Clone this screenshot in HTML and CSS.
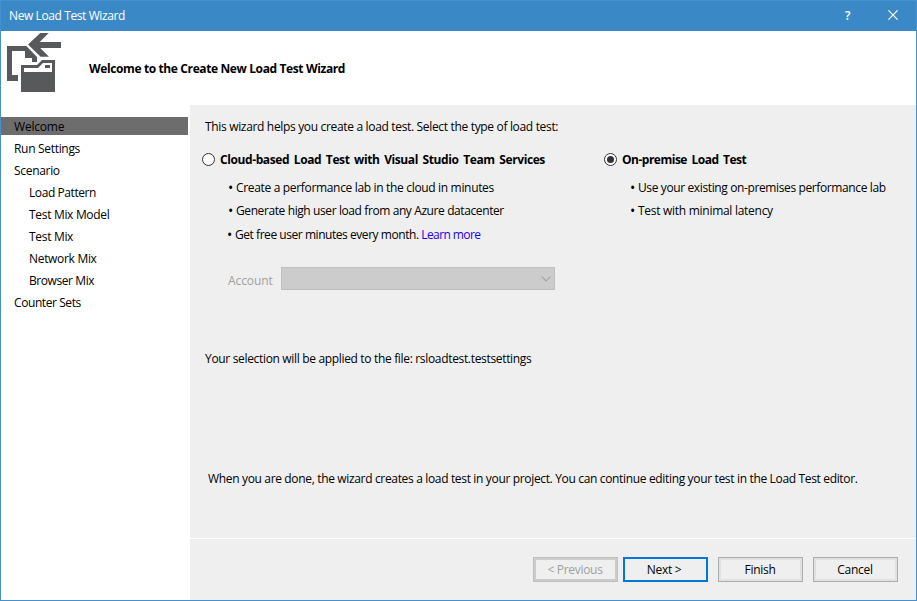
FILE: index.html
```html
<!DOCTYPE html>
<html lang="en">
<head>
<meta charset="utf-8">
<title>New Load Test Wizard</title>
<link rel="stylesheet" href="styles.css">
</head>
<body>
<div class="window">
  <header class="titlebar">
    <span class="title">New Load Test Wizard</span>
    <span class="help">?</span>
    <svg class="close" width="10" height="10" viewBox="0 0 10 10"><path d="M.4.4 9.6 9.6M9.6.4.4 9.6" stroke="#fff" stroke-width="1.2"/></svg>
  </header>
  <div class="banner">
    <svg class="logo" width="54" height="60" viewBox="7 33 54 60">
      <g fill="#58595b">
        <path d="M28 44.5 40.3 33H48.7L39.7 42H61V48H40.2L49 56.8H40.7Z"/>
        <path d="M7 46H26.3L37 57V62H32V58H25V51H12V75H18V81H7Z"/>
        <path fill-rule="evenodd" d="M21 65H37L42 60H55V92H21ZM24 68V72H52V63H43L38 68ZM45 65H50V68H45Z"/>
      </g>
    </svg>
    <h1 class="heading">Welcome to the Create New Load Test Wizard</h1>
  </div>
  <div class="body">
    <nav class="steps">
      <div class="step active">Welcome</div>
      <div class="step">Run Settings</div>
      <div class="step">Scenario</div>
      <div class="step sub tight">Load Pattern</div>
      <div class="step sub">Test Mix Model</div>
      <div class="step sub">Test Mix</div>
      <div class="step sub">Network Mix</div>
      <div class="step sub tight">Browser Mix</div>
      <div class="step tight">Counter Sets</div>
    </nav>
    <main class="page">
      <div class="content">
        <p class="intro">This wizard helps you create a load test. Select the type of load test:</p>
        <div class="choices">
          <section class="cloud">
            <div class="option"><span class="radio"></span><span class="label">Cloud-based Load Test with Visual Studio Team Services</span></div>
            <ul class="bullets">
              <li class="b1">Create a performance lab in the cloud in minutes</li>
              <li class="b2">Generate high user load from any Azure datacenter</li>
              <li class="b3">Get free user minutes every month. <a class="link">Learn more</a></li>
            </ul>
            <div class="account"><span class="account-label">Account</span><div class="select"><svg width="10" height="6" viewBox="0 0 10 6"><path d="M.7.7 5 5 9.3.7" fill="none" stroke="#a3a3a3" stroke-width="1.1"/></svg></div></div>
          </section>
          <section class="premise">
            <div class="option"><span class="radio checked"></span><span class="label l-prem">On-premise Load Test</span></div>
            <ul class="bullets">
              <li class="b4">Use your existing on-premises performance lab</li>
              <li class="b5">Test with minimal latency</li>
            </ul>
          </section>
        </div>
        <p class="applied">Your selection will be applied to the file: rsloadtest.testsettings</p>
        <p class="done">When you are done, the wizard creates a load test in your project. You can continue editing your test in the Load Test editor.</p>
      </div>
      <footer class="actions">
        <button class="btn prev" disabled>&lt; Previous</button>
        <button class="btn next">Next &gt;</button>
        <button class="btn finish">Finish</button>
        <button class="btn cancel">Cancel</button>
      </footer>
    </main>
  </div>
</div>
</body>
</html>
```
FILE: styles.css
```css
* { box-sizing: border-box; margin: 0; padding: 0; }
body { font: 12px/18px "Open Sans", "Noto Sans", sans-serif; letter-spacing: -0.33px; color: #000; white-space: nowrap; overflow: hidden; }
.window { width: 917px; height: 601px; border: 1px solid #4590cf; background: #fff; display: flex; flex-direction: column; }
.titlebar { height: 30px; background: #3b88c6; color: #fff; display: flex; align-items: center; padding: 0 18px 0 8px; }
.title { letter-spacing: -0.4px; }
.help { margin-left: auto; margin-right: 37px; width: 6px; font-weight: 600; }
.close { display: block; margin-top: -2px; }
.banner { height: 74px; display: flex; padding: 2px 0 0 6px; }
.logo { display: block; }
.heading { font-size: 12px; font-weight: 700; line-height: 18px; letter-spacing: -0.38px; margin: 27px 0 0 28px; }
.body { flex: 1; display: flex; }
.steps { width: 189px; padding-top: 12px; letter-spacing: -0.31px; }
.step { height: 18px; line-height: 20px; margin: 0 2px 4px 0; padding-left: 13px; }
.sub { padding-left: 28px; }
.tight { letter-spacing: -0.42px; }
.active { background: #6d6d6d; letter-spacing: -0.2px; }
.page { width: 726px; background: #efefef; display: flex; flex-direction: column; }
.content { height: 433px; padding-left: 15px; }
.intro { padding-top: 13px; height: 46px; }
.choices { display: flex; margin-left: -3px; height: 199px; }
.cloud { width: 402px; }
.option { display: flex; align-items: center; height: 18px; gap: 5px; }
.radio { width: 13px; height: 13px; margin-top: -2px; border: 1px solid #333; border-radius: 50%; background: #fff; display: flex; align-items: center; justify-content: center; }
.checked::after { content: ""; width: 7px; height: 7px; border-radius: 50%; background: #333; }
.label { font-weight: 700; letter-spacing: -0.4px; word-spacing: 1.9px; }
.l-prem { letter-spacing: -0.5px; }
.bullets { list-style: none; padding: 10px 0 0 26px; }
.bullets li { display: flex; height: 23px; white-space: pre; }
.bullets li::before { content: "•"; width: 8px; letter-spacing: 0; font-size: 14px; }
.b2 { letter-spacing: -0.4px; }
.bullets .b3 { height: 24px; margin: 1px 0 0 -1px; letter-spacing: -0.45px; }
.b4 { letter-spacing: -0.38px; }
.b5 { letter-spacing: -0.28px; }
.link { color: #1a00f0; letter-spacing: -0.6px; }
.account { display: flex; margin: 17px 0 0 26px; height: 23px; align-items: center; color: #a0a0a0; }
.account-label { width: 53px; padding-top: 4px; letter-spacing: -0.1px; }
.select { width: 274px; height: 23px; background: #ccc; border: 1px solid #bfbfbf; display: flex; align-items: center; justify-content: flex-end; padding-right: 3px; }
.applied { height: 120px; }
.done { padding-left: 3px; letter-spacing: -0.34px; }
.actions { border-top: 1px solid #fff; flex: 1; display: flex; justify-content: flex-end; padding: 18px 18px 0 0; gap: 10px; }
.btn { width: 85px; height: 25px; font: inherit; letter-spacing: -0.3px; color: #000; background: #efefef; border: 1px solid #adadad; box-shadow: inset 0 0 0 2px #e1e1e1; text-align: center; padding-right: 1px; }
.btn.prev { color: #a0a0a0; border-color: #bfbfbf; box-shadow: inset 0 0 0 2px #ccc; margin-right: -5px; }
.btn.next { border: 2px solid #0078d7; box-shadow: none; padding-right: 3px; }
```
